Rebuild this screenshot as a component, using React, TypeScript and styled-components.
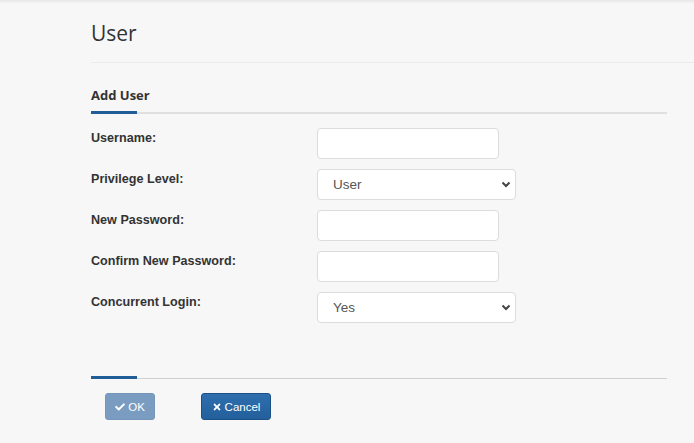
import React from "react";
import styled, { createGlobalStyle } from "styled-components";
import { FaCheck, FaTimes } from "react-icons/fa";

const GlobalStyle = createGlobalStyle`
  html, body { margin: 0; padding: 0; background: #f7f7f7; }
  body { font-family: "Liberation Sans", Arial, sans-serif; color: #333; }
  * { box-sizing: border-box; }
`;

const TopShadow = styled.div`
  height: 4px;
  background: linear-gradient(#e6e6e6, #f1f1f1 60%, #f7f7f7);
`;

const Page = styled.main`
  padding-left: 91px;
`;

const PageHeader = styled.header`
  height: 59px;
  border-bottom: 1px solid #ebebeb;
  padding-top: 15px;
`;

const Title = styled.h1`
  margin: 0;
  font-family: "Open Sans", sans-serif;
  font-weight: 400;
  font-size: 21px;
  line-height: 28px;
  color: #333;
`;

const Panel = styled.section`
  width: 576px;
  padding-top: 23px;
`;

const TabBar = styled.div`
  display: flex;
  border-bottom: 2px solid #e0e0e0;
`;

const Tab = styled.div`
  font-family: "Open Sans", sans-serif;
  font-weight: 700;
  font-size: 13px;
  line-height: 18px;
  color: #333;
  padding-bottom: 8px;
  position: relative;
  &::after {
    content: "";
    position: absolute;
    left: 0;
    bottom: -2px;
    width: 46px;
    height: 3px;
    background: #215e98;
  }
`;

const Form = styled.div`
  display: grid;
  grid-template-columns: 226px 1fr;
  row-gap: 10px;
  padding-top: 14px;
`;

const Label = styled.label`
  font-size: 12.6px;
  font-weight: 700;
  line-height: 14px;
  padding-top: 3px;
  color: #333;
`;

const TextInput = styled.input`
  width: 182px;
  height: 31px;
  border: 1px solid #dcdcdc;
  border-radius: 4px;
  background: #fff;
  font-family: "Liberation Sans", Arial, sans-serif;
  font-size: 13px;
  padding: 0 12px;
  outline: none;
`;

const SelectWrap = styled.div`
  position: relative;
  width: 199px;
  height: 31px;
`;

const Select = styled.select`
  appearance: none;
  width: 100%;
  height: 100%;
  border: 1px solid #dcdcdc;
  border-radius: 4px;
  background: #fff;
  font-family: "Liberation Sans", Arial, sans-serif;
  font-size: 13.5px;
  color: #555;
  padding: 0 12px 0 15px;
  outline: none;
`;

const Chevron = styled.svg`
  position: absolute;
  right: 5px;
  top: 12px;
  width: 10px;
  height: 7px;
  pointer-events: none;
`;

const Footer = styled.div`
  margin-top: 53px;
  height: 3px;
  position: relative;
  border-bottom: 1px solid #d0d0d0;
  &::before {
    content: "";
    position: absolute;
    left: 0;
    top: 0;
    width: 46px;
    height: 3px;
    background: #215e98;
  }
`;

const Buttons = styled.div`
  display: flex;
  gap: 46px;
  padding: 14px 0 0 14px;
`;

const Button = styled.button<{ $primary?: boolean; $disabled?: boolean }>`
  display: inline-flex;
  align-items: center;
  justify-content: center;
  gap: 3px;
  height: 27px;
  width: ${(p) => (p.$primary ? "50px" : "70px")};
  border-radius: 3px;
  font-family: "Liberation Sans", Arial, sans-serif;
  font-size: 11.5px;
  color: #fff;
  padding: 0;
  cursor: pointer;
  border: 1px solid ${(p) => (p.$disabled ? "#7596bb" : "#1b5088")};
  background: ${(p) =>
    p.$disabled
      ? "#7b9cc1"
      : "linear-gradient(#2f6fae, #225f9b)"};
  svg { width: 10px; height: 10px; }
`;

function SelectField({ value, options }: { value: string; options: string[] }) {
  return (
    <SelectWrap>
      <Select defaultValue={value}>
        {options.map((o) => (
          <option key={o}>{o}</option>
        ))}
      </Select>
      <Chevron viewBox="0 0 10 7">
        <path d="M1.5 1.5 L5 5 L8.5 1.5" fill="none" stroke="#444" strokeWidth="2" />
      </Chevron>
    </SelectWrap>
  );
}

export default function App() {
  return (
    <>
      <GlobalStyle />
      <TopShadow />
      <Page>
        <PageHeader>
          <Title>User</Title>
        </PageHeader>
        <Panel>
          <TabBar>
            <Tab>Add User</Tab>
          </TabBar>
          <Form>
            <Label>Username:</Label>
            <TextInput type="text" />
            <Label>Privilege Level:</Label>
            <SelectField value="User" options={["Administrator", "User"]} />
            <Label>New Password:</Label>
            <TextInput type="password" />
            <Label>Confirm New Password:</Label>
            <TextInput type="password" />
            <Label>Concurrent Login:</Label>
            <SelectField value="Yes" options={["Yes", "No"]} />
          </Form>
          <Footer />
          <Buttons>
            <Button $primary $disabled>
              <FaCheck />OK
            </Button>
            <Button>
              <FaTimes />Cancel
            </Button>
          </Buttons>
        </Panel>
      </Page>
    </>
  );
}
